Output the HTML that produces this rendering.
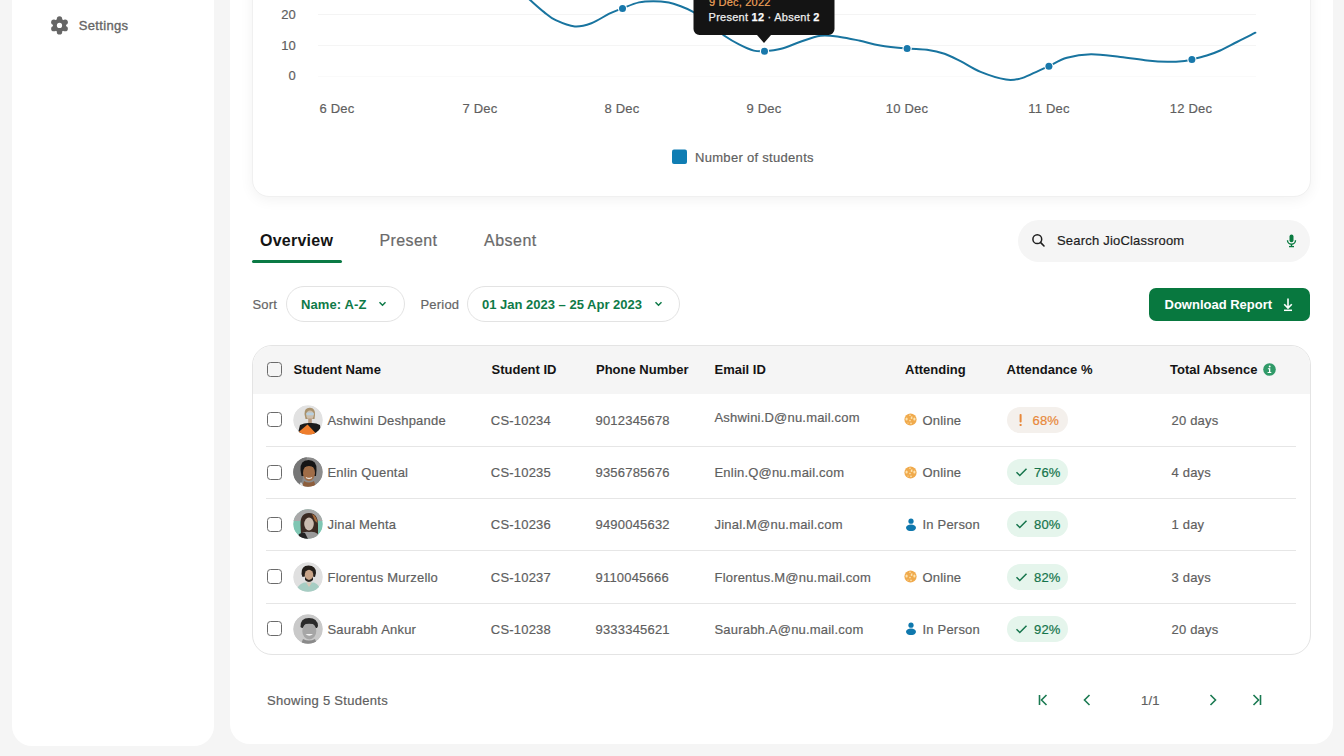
<!DOCTYPE html>
<html><head><meta charset="utf-8">
<style>
*{box-sizing:border-box;margin:0;padding:0}
html,body{width:1344px;height:756px;overflow:hidden;background:#f5f5f5;font-family:"Liberation Sans",sans-serif}
.a{position:absolute}
.t{position:absolute;white-space:nowrap;line-height:1;font-size:13px;color:#5f5f5f;letter-spacing:0.2px}
.b{font-weight:700}
.t:not(.b){-webkit-text-stroke:0.2px currentColor}
#side{left:12px;top:-30px;width:202px;height:776px;background:#fff;border-radius:20px}
#main{left:230px;top:-30px;width:1103px;height:774px;background:#fff;border-radius:20px}
#card{left:251.5px;top:-40px;width:1059px;height:236.5px;background:#fff;border-radius:17px;box-shadow:0 3px 14px rgba(0,0,0,0.055);border:1px solid #f0f0f0}
.yl{width:40px;text-align:right;left:256px}
.xl{width:80px;text-align:center}
.pill{border:1px solid #e3e3e3;border-radius:18px;height:36px;top:286px;background:#fff}
.g{color:#0e7a48}
.cb{position:absolute;width:15px;height:15px;border:1.5px solid #6b6b6b;border-radius:3.5px;left:267px}
.sep{position:absolute;left:266px;width:1030px;height:1px;background:#e6e6e6}
.av{position:absolute;left:293px;width:30px;height:30px;border-radius:50%;overflow:hidden}
.badge{position:absolute;left:1007px;width:61px;height:26px;border-radius:13px}
</style></head><body>
<div id="side" class="a"></div>
<div id="main" class="a"></div>

<!-- sidebar settings -->
<svg class="a" style="left:50px;top:16px" width="19" height="19" viewBox="0 0 19 19"><g fill="#666"><circle cx="9.5" cy="9.4" r="6.6"/><circle cx="9.50" cy="2.90" r="2.7"/><circle cx="15.13" cy="6.15" r="2.7"/><circle cx="15.13" cy="12.65" r="2.7"/><circle cx="9.50" cy="15.90" r="2.7"/><circle cx="3.87" cy="12.65" r="2.7"/><circle cx="3.87" cy="6.15" r="2.7"/></g><circle cx="9.5" cy="9.4" r="2.6" fill="#fff"/></svg>
<div class="t" style="left:78.7px;top:19px;color:#666;font-weight:400;letter-spacing:0.35px;-webkit-text-stroke:0.35px #666">Settings</div>

<!-- chart card -->
<div id="card" class="a"></div>
<svg class="a" style="left:0;top:0" width="1344" height="200">
  <line x1="318" y1="14.5" x2="1256" y2="14.5" stroke="#f4f4f4" stroke-width="1"/>
  <line x1="318" y1="45.5" x2="1256" y2="45.5" stroke="#f5f5f5" stroke-width="1"/>
  <line x1="318" y1="76.5" x2="1256" y2="76.5" stroke="#fafafa" stroke-width="1"/>
  <path fill="none" stroke="#18749f" stroke-width="2" stroke-linecap="round" d="M510,-18 L530.1,0 C535.7,5.0 539.5,8.5 543.8,11.9 C548.1,15.3 550.5,17.8 555.7,20.2 C560.9,22.6 568.8,25.9 574.8,26.4 C580.8,26.9 585.6,25.3 591.4,23.2 C597.1,21.1 604.1,16.2 609.3,13.7 C614.5,11.2 617.4,10.2 622.4,8.3 C627.4,6.4 633.9,3.6 639,2.4 C644.1,1.2 648.3,1.2 653.3,1.2 C658.3,1.2 664.3,1.8 668.8,2.6 C673.2,3.4 676.0,4.5 680,6 C684.0,7.5 688.3,9.1 693.1,11.9 C697.9,14.7 703.6,18.9 709,23 C714.4,27.1 720.1,32.7 725.2,36.3 C730.3,39.9 734.7,42.2 739.5,44.6 C744.3,47.0 749.6,49.5 753.8,50.6 C758.0,51.7 759.9,51.5 764.5,51.2 C769.1,50.9 775.5,50.3 781.2,48.8 C787.0,47.3 792.5,44.5 799,42.3 C805.5,40.1 813.7,36.6 820.5,35.7 C827.3,34.8 833.4,36.0 840,36.9 C846.6,37.8 853.4,39.4 860.1,40.8 C866.8,42.2 872.4,44.1 880.2,45.4 C888.0,46.7 899.2,47.7 907,48.4 C914.8,49.1 920.8,48.9 927,49.8 C933.2,50.7 938.9,51.9 944.5,53.8 C950.1,55.7 954.5,58.2 960.5,61.2 C966.5,64.2 973.0,68.8 980.6,71.9 C988.2,75.0 999.4,78.5 1006,79.6 C1012.6,80.7 1015.4,79.7 1020,78.6 C1024.6,77.5 1028.6,75.3 1033.4,73.2 C1038.2,71.1 1043.2,68.8 1048.8,66.2 C1054.4,63.6 1059.9,59.8 1066.9,57.8 C1073.9,55.8 1082.1,54.4 1091,54.2 C1099.9,54.1 1111.0,55.9 1120.4,56.9 C1129.8,57.9 1139.4,59.7 1147.2,60.5 C1155.0,61.3 1161.0,61.7 1167.3,61.8 C1173.5,61.9 1180.6,61.3 1184.7,60.9 C1188.8,60.5 1188.2,60.4 1191.9,59.5 C1195.6,58.6 1202.1,57.0 1206.8,55.5 C1211.5,54.0 1215.2,52.8 1220.2,50.5 C1225.2,48.2 1231.0,45.0 1236.9,42.0 C1242.8,39.0 1249.1,36.0 1255.4,32.7"/>
  <g fill="#fff"><circle cx="622.5" cy="8.4" r="4.6"/><circle cx="764.5" cy="51.3" r="4.6"/><circle cx="907.1" cy="48.4" r="4.6"/><circle cx="1048.9" cy="66.3" r="4.6"/><circle cx="1191.9" cy="59.6" r="4.6"/></g><g fill="#1878ab"><circle cx="622.5" cy="8.4" r="3.5"/><circle cx="764.5" cy="51.3" r="3.5"/><circle cx="907.1" cy="48.4" r="3.5"/><circle cx="1048.9" cy="66.3" r="3.5"/><circle cx="1191.9" cy="59.6" r="3.5"/></g>
  <!-- tooltip -->
  <path fill="#141414" d="M693.5,-20 H834.5 V29 a6,6 0 0 1 -6,6 H771 L764,43 L757,35 H699.5 a6,6 0 0 1 -6,-6 Z"/>
  <rect x="672" y="149.5" width="15" height="14.5" rx="2" fill="#0f7db3"/>
</svg>
<div class="t yl" style="top:8px">20</div>
<div class="t yl" style="top:39px">10</div>
<div class="t yl" style="top:69px">0</div>
<div class="t xl" style="left:297px;top:102px">6 Dec</div>
<div class="t xl" style="left:440px;top:102px">7 Dec</div>
<div class="t xl" style="left:582px;top:102px">8 Dec</div>
<div class="t xl" style="left:724px;top:102px">9 Dec</div>
<div class="t xl" style="left:867px;top:102px">10 Dec</div>
<div class="t xl" style="left:1009px;top:102px">11 Dec</div>
<div class="t xl" style="left:1151px;top:102px">12 Dec</div>
<div class="t" style="left:695px;top:150.5px;letter-spacing:0.3px">Number of students</div>
<div class="t" style="left:709px;top:-3px;font-size:11px;color:#f0a25a">9 Dec, 2022</div>
<div class="t" style="left:708.6px;top:11.5px;font-size:11px;color:#eeeeee;letter-spacing:0.25px;-webkit-text-stroke:0.25px #eee">Present <b style="color:#fff">12</b> · Absent <b style="color:#fff">2</b></div>

<!-- tabs -->
<div class="t b" style="left:260px;top:233px;font-size:16px;color:#141414;letter-spacing:0.25px">Overview</div>
<div class="t" style="left:379.5px;top:233px;font-size:16px;color:#6a6a6a;letter-spacing:0.4px">Present</div>
<div class="t" style="left:484px;top:233px;font-size:16px;color:#6a6a6a;letter-spacing:0.5px">Absent</div>
<div class="a" style="left:252px;top:259.5px;width:90px;height:3.5px;border-radius:2px;background:#0b7a45"></div>

<!-- search -->
<div class="a" style="left:1018px;top:220px;width:292px;height:42px;border-radius:21px;background:#f5f5f5"></div>
<svg class="a" style="left:1031px;top:233px" width="15" height="15" viewBox="0 0 15 15"><circle cx="6.3" cy="6.2" r="4.4" fill="none" stroke="#1f1f1f" stroke-width="1.5"/><line x1="9.5" y1="9.4" x2="13" y2="13" stroke="#1f1f1f" stroke-width="1.6" stroke-linecap="round"/></svg>
<div class="t" style="left:1057px;top:234px;color:#1d1d1d;letter-spacing:0.2px">Search JioClassroom</div>
<svg class="a" style="left:1286px;top:234px" width="11" height="14" viewBox="0 0 11 14"><rect x="3.5" y="0.6" width="4" height="7.6" rx="2" fill="#0a7a40"/><path d="M1.5,6.2 a4,4 0 0 0 8,0" fill="none" stroke="#0a7a40" stroke-width="1.4"/><line x1="5.5" y1="10" x2="5.5" y2="12" stroke="#0a7a40" stroke-width="1.4"/><line x1="3" y1="12.6" x2="8" y2="12.6" stroke="#0a7a40" stroke-width="1.3"/></svg>

<!-- filters -->
<div class="t" style="left:252.5px;top:298px;color:#666">Sort</div>
<div class="a pill" style="left:286px;width:119px"></div>
<div class="t b g" style="left:301px;top:298px;letter-spacing:0.1px">Name: A-Z</div>
<svg class="a" style="left:378px;top:300px" width="9" height="8" viewBox="0 0 9 8"><path d="M1.5,2.3 L4.5,5.3 L7.5,2.3" fill="none" stroke="#0e7a48" stroke-width="1.5"/></svg>
<div class="t" style="left:420.5px;top:298px;color:#666">Period</div>
<div class="a pill" style="left:467px;width:213px"></div>
<div class="t b g" style="left:482px;top:298px;letter-spacing:0px">01 Jan 2023 – 25 Apr 2023</div>
<svg class="a" style="left:654px;top:300px" width="9" height="8" viewBox="0 0 9 8"><path d="M1.5,2.3 L4.5,5.3 L7.5,2.3" fill="none" stroke="#0e7a48" stroke-width="1.5"/></svg>

<!-- download -->
<div class="a" style="left:1149px;top:287.5px;width:161px;height:33.5px;border-radius:7px;background:#08783f"></div>
<div class="t b" style="left:1164.5px;top:298px;color:#fff;letter-spacing:0px">Download Report</div>
<svg class="a" style="left:1282px;top:297px" width="12" height="15" viewBox="0 0 12 15"><path d="M6,1.5 V11 M2.2,7.2 L6,11 L9.8,7.2" fill="none" stroke="#fff" stroke-width="1.6"/><line x1="2" y1="13.3" x2="10" y2="13.3" stroke="#fff" stroke-width="1.5"/></svg>

<!-- table -->
<div class="a" style="left:251.5px;top:345px;width:1059px;height:310px;border:1px solid #e4e4e4;border-radius:20px;overflow:hidden;background:#fff">
  <div style="height:48px;background:#f5f5f5"></div>
</div>
<div class="cb" style="top:362px"></div>
<div class="t b" style="left:293.5px;top:363px;color:#141414;letter-spacing:0">Student Name</div>
<div class="t b" style="left:491.5px;top:363px;color:#141414;letter-spacing:0">Student ID</div>
<div class="t b" style="left:596px;top:363px;color:#141414;letter-spacing:0">Phone Number</div>
<div class="t b" style="left:714.5px;top:363px;color:#141414;letter-spacing:0">Email ID</div>
<div class="t b" style="left:905px;top:363px;color:#141414;letter-spacing:0">Attending</div>
<div class="t b" style="left:1006.5px;top:363px;color:#141414;letter-spacing:0">Attendance %</div>
<div class="t b" style="left:1170px;top:363px;color:#141414;letter-spacing:0">Total Absence</div>
<svg class="a" style="left:1263px;top:362.5px" width="13" height="13" viewBox="0 0 13 13"><circle cx="6.5" cy="6.5" r="6.3" fill="#309a68"/><path d="M4.9,5.2 H7.3 V9 H8.3 V10.1 H4.6 V9 H6 V6.3 H4.9 Z" fill="#fff"/><circle cx="6.7" cy="3.5" r="0.95" fill="#fff"/></svg>

<!--ROWS-->
<div class="cb" style="top:412.0px"></div>
<svg class="a" style="left:293px;top:404.5px" width="30" height="30" viewBox="0 0 30 30"><defs><clipPath id="c0"><circle cx="15" cy="15" r="14.8"/></clipPath></defs><g clip-path="url(#c0)"><circle cx="15" cy="15" r="15" fill="#e2e2e2"/><path d="M11.5,9 Q11.5,2.5 17,2.8 Q22.5,3.2 22,10 L21.5,14 L12.5,14 Z" fill="#a8916c"/><ellipse cx="17" cy="10" rx="3.8" ry="4.6" fill="#cdbfae"/><rect x="13.3" y="7.6" width="7.5" height="2.6" rx="1" fill="#b8d0e0"/><rect x="15.2" y="13.5" width="3.6" height="5" fill="#b89a80"/><path d="M5,28 L7,20 Q12,17.5 17,18 Q23,17.5 27,20 L28,27 L24,30 Z" fill="#1b1b1b"/><path d="M4.5,28 L14.5,19.5 L23,28.5 L17,31 Z" fill="#ef7d2c"/></g></svg>
<div class="t" style="left:327.5px;top:413.8px">Ashwini Deshpande</div>
<div class="t" style="left:490.8px;top:413.8px">CS-10234</div>
<div class="t" style="left:595.5px;top:413.8px">9012345678</div>
<div class="t" style="left:714.5px;top:410.5px">Ashwini.D@nu.mail.com</div>
<svg class="a" style="left:904.3px;top:413.0px" width="13" height="13" viewBox="0 0 13 13"><circle cx="6.5" cy="6.5" r="6.1" fill="#f0aa4c"/><g fill="#fde3b0"><ellipse cx="2.6" cy="6" rx="1.1" ry="1.6"/><ellipse cx="10.4" cy="6" rx="1.1" ry="1.6"/><circle cx="6" cy="2.3" r="0.8"/><path d="M6.8,3.8 L8.4,3.2 L8.4,5.8 L6.8,6 Z"/><circle cx="6" cy="7.6" r="0.8"/><circle cx="7" cy="10.4" r="0.8"/><circle cx="4" cy="10" r="0.6"/></g></svg>
<div class="t" style="left:922.5px;top:413.8px">Online</div>
<div class="badge" style="top:406.5px;background:#f4f0ec"></div>
<svg class="a" style="left:1019px;top:413.5px" width="4" height="13" viewBox="0 0 4 13"><rect x="0.6" y="0" width="2" height="8.6" rx="0.8" fill="#e8883a"/><rect x="0.6" y="10" width="2" height="2" rx="0.6" fill="#e8883a"/></svg>
<div class="t" style="left:1032.5px;top:413.8px;color:#e8883a">68%</div>
<div class="t" style="left:1171.5px;top:413.8px">20 days</div>
<div class="sep" style="top:446.0px"></div>
<div class="cb" style="top:464.5px"></div>
<svg class="a" style="left:293px;top:457.0px" width="30" height="30" viewBox="0 0 30 30"><defs><clipPath id="c1"><circle cx="15" cy="15" r="14.8"/></clipPath></defs><g clip-path="url(#c1)"><circle cx="15" cy="15" r="15" fill="#8c8c8c"/><path d="M0,0 L14,0 L8,30 L0,30 Z" fill="#777"/><path d="M7.5,13 Q7,3 15.5,3 Q24,3 23.5,13 L23,19 L8.5,19 Z" fill="#151515"/><ellipse cx="16" cy="16" rx="6" ry="8" fill="#a06d47"/><path d="M10.5,11 Q16,7 21.5,11 L21.5,9 Q16,5 10.5,9 Z" fill="#151515"/><path d="M13,20.5 Q16,22.5 19,20.5" stroke="#e8e0d8" stroke-width="1.4" fill="none"/><path d="M9,30 L11,24 Q16,27 21,24 L23,30 Z" fill="#8d5e3c"/><path d="M5,30 L8,25 L11,30 Z" fill="#e6e6e6"/></g></svg>
<div class="t" style="left:327.5px;top:466.3px">Enlin Quental</div>
<div class="t" style="left:490.8px;top:466.3px">CS-10235</div>
<div class="t" style="left:595.5px;top:466.3px">9356785676</div>
<div class="t" style="left:714.5px;top:466.3px">Enlin.Q@nu.mail.com</div>
<svg class="a" style="left:904.3px;top:465.5px" width="13" height="13" viewBox="0 0 13 13"><circle cx="6.5" cy="6.5" r="6.1" fill="#f0aa4c"/><g fill="#fde3b0"><ellipse cx="2.6" cy="6" rx="1.1" ry="1.6"/><ellipse cx="10.4" cy="6" rx="1.1" ry="1.6"/><circle cx="6" cy="2.3" r="0.8"/><path d="M6.8,3.8 L8.4,3.2 L8.4,5.8 L6.8,6 Z"/><circle cx="6" cy="7.6" r="0.8"/><circle cx="7" cy="10.4" r="0.8"/><circle cx="4" cy="10" r="0.6"/></g></svg>
<div class="t" style="left:922.5px;top:466.3px">Online</div>
<div class="badge" style="top:459.0px;background:#e5f5ec"></div>
<svg class="a" style="left:1015px;top:466.0px" width="13" height="12" viewBox="0 0 13 12"><path d="M1.5,6.3 L4.8,9.5 L11.5,2.8" fill="none" stroke="#15744b" stroke-width="1.5"/></svg>
<div class="t" style="left:1034px;top:466.3px;color:#15744b">76%</div>
<div class="t" style="left:1171.5px;top:466.3px">4 days</div>
<div class="sep" style="top:498.0px"></div>
<div class="cb" style="top:516.6px"></div>
<svg class="a" style="left:293px;top:509.1px" width="30" height="30" viewBox="0 0 30 30"><defs><clipPath id="c2"><circle cx="15" cy="15" r="14.8"/></clipPath></defs><g clip-path="url(#c2)"><circle cx="15" cy="15" r="15" fill="#7fc6b3"/><rect x="0" y="0" width="30" height="12" fill="#a9a9a9"/><path d="M7.5,16 Q7,4 16,4 Q25,4 25,16 L25,25 Q20,27 16,26 Q11,27 8,25 Z" fill="#3b2a22"/><path d="M19,5 Q24,7 24.5,14 L22,12 Z" fill="#a36a3c"/><ellipse cx="16" cy="15" rx="4.8" ry="6.5" fill="#cbbcb0"/><path d="M5,30 L7,25 Q12,22 16,23 Q21,22 25,25 L27,30 Z" fill="#9a9a9a"/><path d="M4,30 L6,25 Q10,23 12,24 L15,30 Z" fill="#222"/></g></svg>
<div class="t" style="left:327.5px;top:518.4px">Jinal Mehta</div>
<div class="t" style="left:490.8px;top:518.4px">CS-10236</div>
<div class="t" style="left:595.5px;top:518.4px">9490045632</div>
<div class="t" style="left:714.5px;top:518.4px">Jinal.M@nu.mail.com</div>
<svg class="a" style="left:905px;top:517.6px" width="12" height="13" viewBox="0 0 12 13"><circle cx="6" cy="3.2" r="2.6" fill="#0f78ad"/><ellipse cx="6" cy="9.8" rx="5" ry="3.3" fill="#0f78ad"/></svg>
<div class="t" style="left:922.5px;top:518.4px">In Person</div>
<div class="badge" style="top:511.1px;background:#e5f5ec"></div>
<svg class="a" style="left:1015px;top:518.1px" width="13" height="12" viewBox="0 0 13 12"><path d="M1.5,6.3 L4.8,9.5 L11.5,2.8" fill="none" stroke="#15744b" stroke-width="1.5"/></svg>
<div class="t" style="left:1034px;top:518.4px;color:#15744b">80%</div>
<div class="t" style="left:1171.5px;top:518.4px">1 day</div>
<div class="sep" style="top:550.2px"></div>
<div class="cb" style="top:569.0px"></div>
<svg class="a" style="left:293px;top:561.5px" width="30" height="30" viewBox="0 0 30 30"><defs><clipPath id="c3"><circle cx="15" cy="15" r="14.8"/></clipPath></defs><g clip-path="url(#c3)"><circle cx="15" cy="15" r="15" fill="#e0e0e0"/><path d="M8.5,12 Q8,3.5 15.5,3.5 Q23,3.5 23,11 L22,15 Q16,13 9.5,15 Z" fill="#231e1a"/><ellipse cx="16" cy="13" rx="4.3" ry="5.3" fill="#c8a488"/><path d="M12,15 Q16,21 20,15 L20,18 Q16,22 12,18 Z" fill="#2a2420"/><path d="M3,30 Q4,23 11,20.5 L21,20.5 Q27,23 28,30 Z" fill="#a6cdc3"/><path d="M13,20.5 L16,25 L19,20.5 Z" fill="#d9c6b6"/></g></svg>
<div class="t" style="left:327.5px;top:570.8px">Florentus Murzello</div>
<div class="t" style="left:490.8px;top:570.8px">CS-10237</div>
<div class="t" style="left:595.5px;top:570.8px">9110045666</div>
<div class="t" style="left:714.5px;top:570.8px">Florentus.M@nu.mail.com</div>
<svg class="a" style="left:904.3px;top:570.0px" width="13" height="13" viewBox="0 0 13 13"><circle cx="6.5" cy="6.5" r="6.1" fill="#f0aa4c"/><g fill="#fde3b0"><ellipse cx="2.6" cy="6" rx="1.1" ry="1.6"/><ellipse cx="10.4" cy="6" rx="1.1" ry="1.6"/><circle cx="6" cy="2.3" r="0.8"/><path d="M6.8,3.8 L8.4,3.2 L8.4,5.8 L6.8,6 Z"/><circle cx="6" cy="7.6" r="0.8"/><circle cx="7" cy="10.4" r="0.8"/><circle cx="4" cy="10" r="0.6"/></g></svg>
<div class="t" style="left:922.5px;top:570.8px">Online</div>
<div class="badge" style="top:563.5px;background:#e5f5ec"></div>
<svg class="a" style="left:1015px;top:570.5px" width="13" height="12" viewBox="0 0 13 12"><path d="M1.5,6.3 L4.8,9.5 L11.5,2.8" fill="none" stroke="#15744b" stroke-width="1.5"/></svg>
<div class="t" style="left:1034px;top:570.8px;color:#15744b">82%</div>
<div class="t" style="left:1171.5px;top:570.8px">3 days</div>
<div class="sep" style="top:602.8px"></div>
<div class="cb" style="top:621.4px"></div>
<svg class="a" style="left:293px;top:613.9px" width="30" height="30" viewBox="0 0 30 30"><defs><clipPath id="c4"><circle cx="15" cy="15" r="14.8"/></clipPath></defs><g clip-path="url(#c4)"><circle cx="15" cy="15" r="15" fill="#c9c9c9"/><path d="M7.5,13 Q7,4 16,4 Q24.5,4 25,12 L24,14 L9,14 Z" fill="#2a2a2a"/><ellipse cx="16.3" cy="17" rx="7" ry="8.5" fill="#a6a6a6"/><path d="M9.5,11 Q16,8.5 23,11 L23,9.5 Q16,6 9.5,9.5 Z" fill="#2a2a2a"/><path d="M12.5,20 Q16.3,23.5 20,20 Z" fill="#f2f2f2"/><path d="M8,30 L10,25 Q16,28 22,25 L24,30 Z" fill="#8a8a8a"/></g></svg>
<div class="t" style="left:327.5px;top:623.2px">Saurabh Ankur</div>
<div class="t" style="left:490.8px;top:623.2px">CS-10238</div>
<div class="t" style="left:595.5px;top:623.2px">9333345621</div>
<div class="t" style="left:714.5px;top:623.2px">Saurabh.A@nu.mail.com</div>
<svg class="a" style="left:905px;top:622.4px" width="12" height="13" viewBox="0 0 12 13"><circle cx="6" cy="3.2" r="2.6" fill="#0f78ad"/><ellipse cx="6" cy="9.8" rx="5" ry="3.3" fill="#0f78ad"/></svg>
<div class="t" style="left:922.5px;top:623.2px">In Person</div>
<div class="badge" style="top:615.9px;background:#e5f5ec"></div>
<svg class="a" style="left:1015px;top:622.9px" width="13" height="12" viewBox="0 0 13 12"><path d="M1.5,6.3 L4.8,9.5 L11.5,2.8" fill="none" stroke="#15744b" stroke-width="1.5"/></svg>
<div class="t" style="left:1034px;top:623.2px;color:#15744b">92%</div>
<div class="t" style="left:1171.5px;top:623.2px">20 days</div>
<!--/ROWS-->

<!-- footer -->
<div class="t" style="left:267px;top:694px;color:#5f5f5f;letter-spacing:0.3px">Showing 5 Students</div>
<svg class="a" style="left:1030px;top:688px" width="240" height="24" viewBox="0 0 240 24">
  <g fill="none" stroke="#1b7a52" stroke-width="1.6">
    <line x1="9.5" y1="7" x2="9.5" y2="17"/><path d="M16.5,7 L11.5,12 L16.5,17"/>
    <path d="M59.5,7 L54.5,12 L59.5,17"/>
    <path d="M180.5,7 L185.5,12 L180.5,17"/>
    <path d="M223.5,7 L228.5,12 L223.5,17"/><line x1="230.5" y1="7" x2="230.5" y2="17"/>
  </g>
</svg>
<div class="t" style="left:1141px;top:694px;color:#5f5f5f">1/1</div>
</body></html>
